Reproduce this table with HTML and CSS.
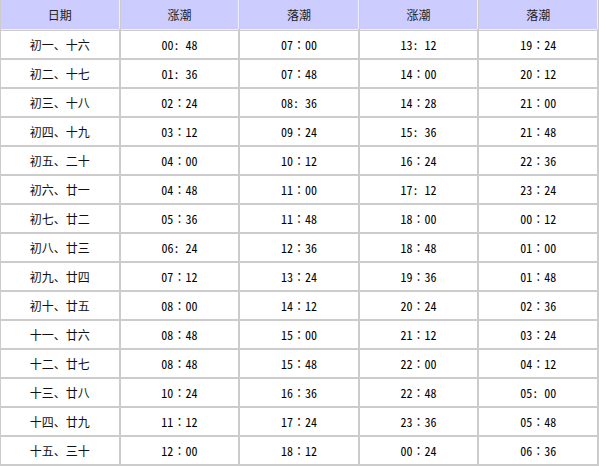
FILE: index.html
```html
<!DOCTYPE html>
<html lang="zh">
<head>
<meta charset="utf-8">
<link rel="stylesheet" href="styles.css">
</head>
<body>
<table class="tide">
  <thead>
    <tr><th>日期</th><th>涨潮</th><th>落潮</th><th>涨潮</th><th>落潮</th></tr>
  </thead>
  <tbody>
    <tr><td>初一、十六</td><td>00: 48</td><td>07<span class="fc">：</span>00</td><td>13: 12</td><td>19<span class="fc">：</span>24</td></tr>
    <tr><td>初二、十七</td><td>01: 36</td><td>07<span class="fc">：</span>48</td><td>14<span class="fc">：</span>00</td><td>20<span class="fc">：</span>12</td></tr>
    <tr><td>初三、十八</td><td>02<span class="fc">：</span>24</td><td>08: 36</td><td>14<span class="fc">：</span>28</td><td>21<span class="fc">：</span>00</td></tr>
    <tr><td>初四、十九</td><td>03<span class="fc">：</span>12</td><td>09<span class="fc">：</span>24</td><td>15: 36</td><td>21<span class="fc">：</span>48</td></tr>
    <tr><td>初五、二十</td><td>04<span class="fc">：</span>00</td><td>10<span class="fc">：</span>12</td><td>16<span class="fc">：</span>24</td><td>22<span class="fc">：</span>36</td></tr>
    <tr><td>初六、廿一</td><td>04<span class="fc">：</span>48</td><td>11<span class="fc">：</span>00</td><td>17: 12</td><td>23<span class="fc">：</span>24</td></tr>
    <tr><td>初七、廿二</td><td>05<span class="fc">：</span>36</td><td>11<span class="fc">：</span>48</td><td>18<span class="fc">：</span>00</td><td>00<span class="fc">：</span>12</td></tr>
    <tr><td>初八、廿三</td><td>06: 24</td><td>12<span class="fc">：</span>36</td><td>18<span class="fc">：</span>48</td><td>01<span class="fc">：</span>00</td></tr>
    <tr><td>初九、廿四</td><td>07<span class="fc">：</span>12</td><td>13<span class="fc">：</span>24</td><td>19<span class="fc">：</span>36</td><td>01<span class="fc">：</span>48</td></tr>
    <tr><td>初十、廿五</td><td>08<span class="fc">：</span>00</td><td>14<span class="fc">：</span>12</td><td>20<span class="fc">：</span>24</td><td>02<span class="fc">：</span>36</td></tr>
    <tr><td>十一、廿六</td><td>08<span class="fc">：</span>48</td><td>15<span class="fc">：</span>00</td><td>21<span class="fc">：</span>12</td><td>03<span class="fc">：</span>24</td></tr>
    <tr><td>十二、廿七</td><td>08<span class="fc">：</span>48</td><td>15<span class="fc">：</span>48</td><td>22<span class="fc">：</span>00</td><td>04<span class="fc">：</span>12</td></tr>
    <tr><td>十三、廿八</td><td>10<span class="fc">：</span>24</td><td>16<span class="fc">：</span>36</td><td>22<span class="fc">：</span>48</td><td>05: 00</td></tr>
    <tr><td>十四、廿九</td><td>11<span class="fc">：</span>12</td><td>17<span class="fc">：</span>24</td><td>23<span class="fc">：</span>36</td><td>05<span class="fc">：</span>48</td></tr>
    <tr><td>十五、三十</td><td>12<span class="fc">：</span>00</td><td>18<span class="fc">：</span>12</td><td>00<span class="fc">：</span>24</td><td>06<span class="fc">：</span>36</td></tr>
  </tbody>
</table>
</body>
</html>
```

FILE: styles.css
```css
html, body {
  margin: 0;
  padding: 0;
  background: #ffffff;
}

.tide {
  width: 600px;
  margin: -2px 0 0 -1px;
  border-spacing: 2px;
  border-collapse: separate;
  table-layout: fixed;
  background: #cccccc;
  font-family: "Noto Sans CJK SC", "DejaVu Sans", sans-serif;
  font-size: 12px;
  color: #111111;
}

.tide th,
.tide td {
  padding: 0;
  text-align: center;
  vertical-align: middle;
  font-weight: normal;
  line-height: 14px;
}

.tide th {
  height: 29px;
  background: #ccccff;
  color: #222222;
  box-shadow: 1px 0 0 #eef0ff, 0 1px 0 #eef0ff;
}

.tide td {
  height: 27px;
  background: #ffffff;
}

.tide td + td {
  font-family: "Noto Sans CJK TC", "Noto Sans CJK SC", sans-serif;
  font-feature-settings: "hwid" 1;
  white-space: pre;
  color: #000000;
}

.tide .fc {
  font-feature-settings: "hwid" 0;
}
```
